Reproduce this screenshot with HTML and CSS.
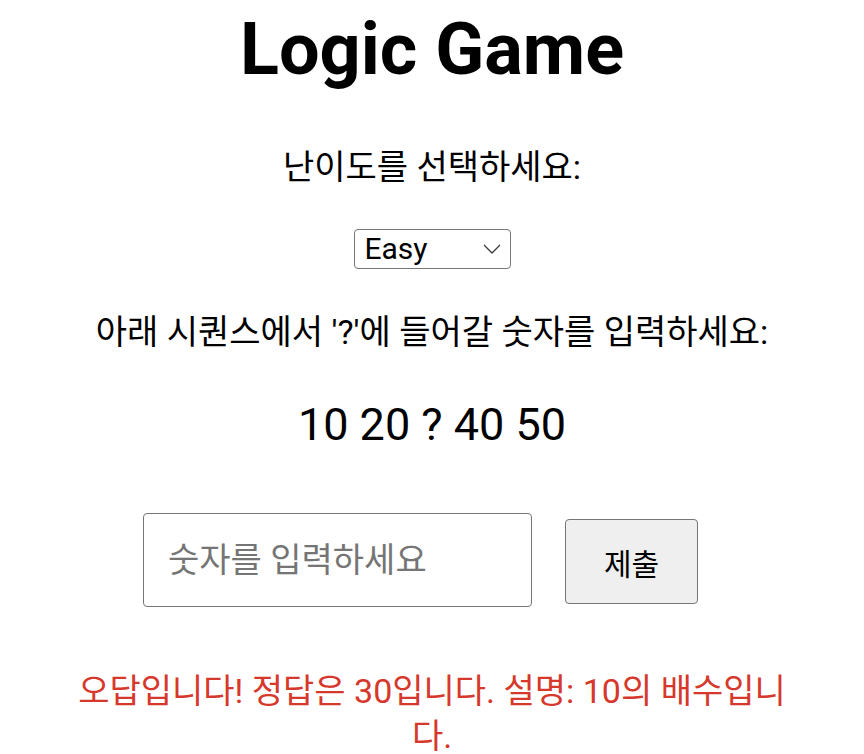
FILE: index.html
```html
<!DOCTYPE html>
<html lang="ko">
<head>
<meta charset="utf-8">
<title>Logic Game</title>
<link rel="stylesheet" href="styles.css">
</head>
<body>
<main class="game">
  <h1 class="title">Logic Game</h1>
  <p class="label">난이도를 선택하세요:</p>
  <div class="select-row">
    <span class="select-wrap">
      <select class="difficulty">
        <option>Easy</option>
        <option>Medium</option>
        <option>Hard</option>
      </select>
      <svg class="chevron" width="18" height="10" viewBox="0 0 18 10" aria-hidden="true">
        <path d="M1 1 L9 9 L17 1" fill="none" stroke="#3c3c3c" stroke-width="1.3"/>
      </svg>
    </span>
  </div>
  <p class="label question">아래 시퀀스에서 '?'에 들어갈 숫자를 입력하세요:</p>
  <p class="sequence">10 20 ? 40 50</p>
  <div class="answer-row">
    <input class="answer" type="text" placeholder="숫자를 입력하세요">
    <button class="submit" type="button">제출</button>
  </div>
  <p class="result">오답입니다! 정답은 30입니다. 설명: 10의 배수입니다.</p>
</main>
</body>
</html>
```

FILE: styles.css
```css
html, body {
  margin: 0;
  padding: 0;
  background: #ffffff;
}

body {
  font-family: Roboto, "Noto Sans CJK KR", sans-serif;
  color: #000;
}

.game {
  width: 730px;
  margin: 0 auto;
  text-align: center;
}

.title {
  font-size: 72px;
  font-weight: 700;
  margin: 8px 0 0;
  line-height: 84px;
}

.label {
  font-size: 34px;
  margin: 0;
  line-height: 44px;
}

.title + .label {
  margin-top: 53px;
}

.select-row {
  margin-top: 40px;
  height: 40px;
}

.select-wrap {
  position: relative;
  display: inline-block;
  height: 40px;
}

.difficulty {
  box-sizing: border-box;
  appearance: none;
  -webkit-appearance: none;
  width: 157px;
  height: 40px;
  font-family: Roboto, "Noto Sans CJK KR", sans-serif;
  font-size: 30px;
  line-height: 38px;
  color: #000;
  background: #fff;
  border: 1px solid #767676;
  border-radius: 4px;
  padding: 0 0 0 10px;
  display: block;
}

.chevron {
  position: absolute;
  right: 10px;
  top: 15px;
  pointer-events: none;
}

.question {
  margin-top: 41px;
}

.sequence {
  font-size: 45px;
  margin: 44px 0 0;
  line-height: 54px;
}

.answer-row {
  display: flex;
  justify-content: center;
  align-items: flex-start;
  gap: 33px;
  padding-right: 23px;
  margin-top: 61px;
}

.answer {
  box-sizing: border-box;
  width: 389px;
  height: 94px;
  padding: 0 24px;
  font-family: Roboto, "Noto Sans CJK KR", sans-serif;
  font-size: 34px;
  border: 1px solid #767676;
  border-radius: 4px;
  margin: 0;
}

.answer::placeholder {
  color: #757575;
}

.submit {
  box-sizing: border-box;
  width: 133px;
  height: 85px;
  margin: 6px 0 0;
  font-family: Roboto, "Noto Sans CJK KR", sans-serif;
  font-size: 30px;
  color: #000;
  background: #efefef;
  border: 1px solid #767676;
  border-radius: 4px;
}

.result {
  color: #d6382b;
  font-size: 34px;
  line-height: 45px;
  margin: 62px 0 0;
}
```
